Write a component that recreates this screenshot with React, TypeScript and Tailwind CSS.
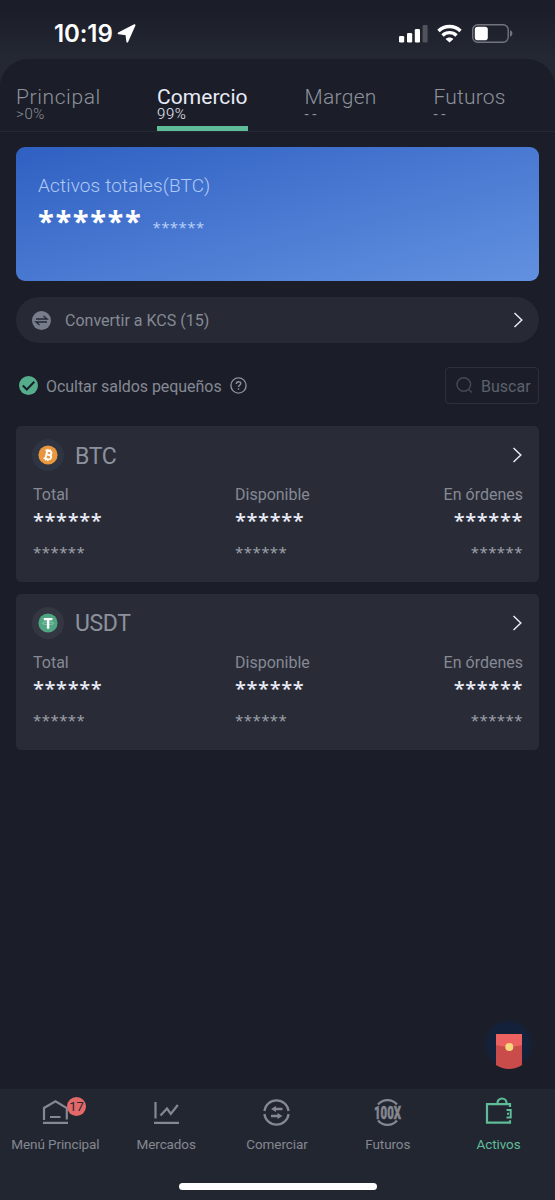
import type { ReactNode } from 'react';
import clsx from 'clsx';

interface Tab {
  label: string;
  share: string;
  active?: boolean;
  width: string;
  tracking: string;
}

const tabs: Tab[] = [
  { label: 'Principal', share: '>0%', width: 'w-[141px]', tracking: 'tracking-[0.6px]' },
  { label: 'Comercio', share: '99%', active: true, width: 'w-[147.5px]', tracking: 'tracking-[0.05px]' },
  { label: 'Margen', share: '--', width: 'w-[129px]', tracking: 'tracking-[0.3px]' },
  { label: 'Futuros', share: '--', width: 'w-[100px]', tracking: 'tracking-[0.2px]' },
];

function Mask({ className }: { className: string }) {
  return <span className={clsx("block font-['Open_Sans',sans-serif]", className)}>******</span>;
}

function Chevron() {
  return (
    <svg className="h-4 w-[11px]" viewBox="0 0 11 16" fill="none" stroke="#e6e9f5" strokeWidth="1.5">
      <path d="M1.5 1 8.8 8l-7.3 7" />
    </svg>
  );
}

function StatusBar() {
  return (
    <div className="flex h-[85px] shrink-0 bg-linear-to-b from-[#1b1e28] from-10% to-[#242833] to-70% pl-[54px]">
      <div className="flex h-[67px] w-full items-center">
        <span className="w-[63px] font-['Inter',sans-serif] text-[24px] font-semibold tracking-[-0.1px] text-white">10:19</span>
        <svg className="h-[19px] w-[19px]" viewBox="0 0 19 19" fill="#fff" stroke="#fff" strokeWidth="1.8" strokeLinejoin="round">
          <path d="M1.6 9.300 17.600 1.100 10.300 17.600 9.300 10.300Z" />
        </svg>
        <svg className="ml-[263px] h-[18px] w-[29px]" viewBox="0 0 29 18" fill="#fff">
          <rect x="0" y="11" width="5.200" height="6.500" rx="1.300" />
          <rect x="8" y="8" width="5.200" height="9.500" rx="1.300" />
          <rect x="15.800" y="4" width="5.200" height="13.500" rx="1.300" />
          <rect x="23.600" y="0" width="5" height="17.500" rx="1.300" fill="#50535d" />
        </svg>
        <svg className="ml-[9px] h-[19px] w-[25px]" viewBox="0 0 25 19" fill="none" stroke="#fff" strokeWidth="3.400">
          <path d="M1.500 7C7.500.9 17.500.9 23.500 7" />
          <path d="M5.500 11.500c3.900-3.800 10.100-3.800 14 0" />
          <path d="M12.500 18.600 8.600 14.900c2.200-2 5.600-2 7.800 0Z" fill="#fff" stroke="none" />
        </svg>
        <svg className="ml-[10px] h-[19px] w-[41px]" viewBox="0 0 41 19">
          <rect x="0.700" y="0.700" width="35.500" height="17.600" rx="5" fill="none" stroke="#72757e" strokeWidth="1.400" />
          <rect x="2.800" y="2.800" width="13" height="13.400" rx="2.800" fill="#fff" />
          <path d="M38 6.300c3.200 1.200 3.200 5.200 0 6.400Z" fill="#72757e" />
        </svg>
      </div>
    </div>
  );
}

function AccountTabs() {
  return (
    <div className="flex h-[73px] border-b border-[#242833] pt-7 pl-4">
      {tabs.map((tab) => (
        <div key={tab.label} className={clsx('shrink-0', tab.width, tab.active ? 'text-[#e8ebf6]' : 'text-[#8e929d]')}>
          <div className={clsx('text-[21px] leading-5', tab.tracking, !tab.active && 'font-light')}>{tab.label}</div>
          <div className={clsx('text-[15px] leading-[15px]', tab.share === '--' ? 'tracking-[3.5px]' : 'font-light tracking-[0.6px]')}>
            {tab.share}
          </div>
          {tab.active && <div className="mt-1 h-[5px] w-[91px] bg-[#5fbc98]" />}
        </div>
      ))}
    </div>
  );
}

function BtcIcon() {
  return (
    <svg className="size-8" viewBox="0 0 32 32">
      <circle cx="16" cy="16" r="16" fill="#2e3441" />
      <circle cx="16" cy="16" r="9.600" fill="#e9973e" />
      <g transform="rotate(13 16 16)" fill="none" stroke="#fff" strokeWidth="1.900">
        <path d="M12.400 11.800h4.600a1.900 1.900 0 0 1 0 3.900h-2.600 3a2.200 2.200 0 0 1 0 4.400h-5M14.300 11.800v8.300" />
        <path d="M14.800 10v2M17 10v2M14.800 20v2M17 20v2" strokeWidth="1.300" />
      </g>
    </svg>
  );
}

function UsdtIcon() {
  return (
    <svg className="size-8" viewBox="0 0 32 32" fill="none">
      <circle cx="16" cy="16" r="16" fill="#343641" />
      <circle cx="16" cy="16" r="9.600" fill="#4fa582" />
      <ellipse cx="16" cy="16.300" rx="5.700" ry="1.300" stroke="#9fd2bd" strokeWidth=".7" />
      <path d="M11.800 12.100h8.600M16.100 12v9.700" stroke="#fff" strokeWidth="2.400" />
    </svg>
  );
}

const columns = [
  { label: 'Total', align: 'w-[202px]' },
  { label: 'Disponible', align: 'w-[180px]' },
  { label: 'En órdenes', align: 'ml-auto flex flex-col items-end' },
];

function AssetCard({ name, icon }: { name: string; icon: ReactNode }) {
  return (
    <div className="h-[156px] rounded-[5px] bg-[#292c36] px-4 pt-[13px]">
      <div className="flex h-8 items-center">
        {icon}
        <span className="mt-[3px] ml-[11px] flex-1 text-[23px] leading-8 tracking-[-0.4px] text-[#8d919d]">{name}</span>
        <Chevron />
      </div>
      <div className="mt-4 flex pl-px">
        {columns.map((column) => (
          <div key={column.label} className={column.align}>
            <div className="text-[16px] leading-4 text-[#858994]">{column.label}</div>
            <Mask className="mt-2 h-5 text-[20px] leading-5 font-semibold tracking-[0.6px] text-[#e8ebf6]" />
            <Mask className="mt-[13px] h-4 text-[15px] leading-4 tracking-[0.45px] text-[#a0a4ae]" />
          </div>
        ))}
      </div>
    </div>
  );
}

const navItems: { label: string; badge?: string; active?: boolean; icon: ReactNode }[] = [
  {
    label: 'Menú Principal',
    badge: '17',
    icon: <path d="M3 22V10L14.500 3.200 25.800 10v11.500M2 24.800h25M9 19h10.500" />,
  },
  { label: 'Mercados', icon: <path d="M3.500 4v16.500M2 24.800h25M8.500 17.500l6.500-7 3.800 5.500 7-9" /> },
  {
    label: 'Comerciar',
    icon: (
      <>
        <path d="M2.400 13A12.200 12.200 0 0 1 26.600 13M26.600 16A12.200 12.200 0 0 1 2.400 16" />
        <path d="M12 11h8.500M9 18h8.500" strokeWidth="2.400" />
        <path d="m9 11 5-3v6ZM20.500 18l-5-3v6Z" fill="currentColor" stroke="none" />
      </>
    ),
  },
  {
    label: 'Futuros',
    icon: (
      <>
        <path d="M5 6.500a12.500 12.500 0 0 1 19 0M5 22.500a12.500 12.500 0 0 0 19 0" />
        <text
          x="1"
          y="21"
          textLength="27"
          lengthAdjust="spacingAndGlyphs"
          fontSize="18.500"
          fontWeight="900"
          fill="currentColor"
          strokeWidth=".5"
        >
          100X
        </text>
      </>
    ),
  },
  {
    label: 'Activos',
    active: true,
    icon: (
      <>
        <path d="M26 9V6.200H3v18.500h23v-2.500M13.500 6V5a4.500 4.500 0 0 1 9 0v1" />
        <path d="M22.500 12h4.200v7.500h-4.200M23 15.700h2" strokeWidth="2" />
      </>
    ),
  },
];

function BottomNav() {
  return (
    <div className="mt-auto h-[111px] bg-[#222631] pt-[9px]">
      <div className="grid w-[554px] grid-cols-5">
        {navItems.map((item) => (
          <div key={item.label} className={clsx('relative flex flex-col items-center', item.active ? 'text-[#5fbc98]' : 'text-[#858890]')}>
            <svg className="h-[29px] w-[29px] overflow-visible" viewBox="0 0 29 29" fill="none" stroke="currentColor" strokeWidth="2.200">
              {item.icon}
            </svg>
            {item.badge && (
              <span className="absolute top-[-1px] left-[67px] flex size-[19px] items-center justify-center rounded-full bg-[#e26968] text-[13px] text-[#252833]">
                {item.badge}
              </span>
            )}
            <span className="mt-[9px] text-[13.5px] leading-4 tracking-[-0.1px] whitespace-nowrap">{item.label}</span>
          </div>
        ))}
      </div>
      <div className="mx-auto mt-[31px] h-[7px] w-[198px] rounded-full bg-white" />
    </div>
  );
}

export default function App() {
  return (
    <div className="relative flex h-[1200px] w-[555px] flex-col overflow-hidden bg-[#1b1e28] font-['Roboto',sans-serif]">
      <StatusBar />
      <div className="-mt-[26px] rounded-t-[28px] bg-[#1b1e28]">
        <AccountTabs />
        <div className="px-4">
          <div className="mt-[15px] h-[134px] rounded-[9px] bg-linear-[165deg] from-[#2f60c2] to-[#6291e0] px-[22px] pt-[29px]">
            <div className="text-[19px] leading-5 font-light tracking-[0.15px] text-[#afc9f5]">Activos totales(BTC)</div>
            <div className="mt-[10px] flex">
              <Mask className="text-[29px] leading-[30px] font-bold tracking-[1.6px] text-white" />
              <Mask className="mt-1.5 ml-[10px] text-[15px] leading-[30px] tracking-[0.45px] text-[#b9d0f8]" />
            </div>
          </div>

          <div className="mt-4 flex h-[46px] items-center rounded-full bg-[#272a34] pr-[15px] pl-4">
            <svg className="size-[19px]" viewBox="0 0 19 19" fill="none" stroke="#272a34" strokeWidth="1.400">
              <circle cx="9.500" cy="9.500" r="9.500" fill="#787d8c" stroke="none" />
              <path d="M4 8h11l-3.500-3M15 11H4l3.500 3" />
            </svg>
            <span className="mt-0.5 ml-[14px] flex-1 text-[16px] text-[#858994]">Convertir a KCS (15)</span>
            <Chevron />
          </div>

          <div className="mt-6 flex h-[37px] items-center">
            <svg className="ml-[3px] size-[19px]" viewBox="0 0 19 19" fill="none">
              <circle cx="9.500" cy="9.500" r="9.500" fill="#56ad8b" />
              <path d="m3.800 9.500 4 4 7.500-7.700" stroke="#1b1e28" strokeWidth="2" />
            </svg>
            <span className="mt-[3px] ml-2 w-[176px] text-[16px] tracking-[-0.05px] whitespace-nowrap text-[#858994]">
              Ocultar saldos pequeños
            </span>
            <svg className="ml-2 size-[17px]" viewBox="0 0 17 17" fill="none" stroke="#8b8f9a" strokeWidth="1.400">
              <circle cx="8.500" cy="8.500" r="7.600" />
              <path d="M6.300 7c0-3 4.500-2.900 4.500-.4C10.800 8.200 8.500 8.200 8.500 10M8.500 11.200v1.500" />
            </svg>
            <div className="ml-auto flex h-[37px] w-[94px] items-center rounded-[4px] border border-[#2d303b] pl-[10px]">
              <svg className="size-[17px]" viewBox="0 0 17 17" fill="none" stroke="#464a55" strokeWidth="1.400">
                <circle cx="7.800" cy="7.500" r="6.800" />
                <path d="m12.500 12.500 3.500 3" />
              </svg>
              <span className="mt-[3px] ml-2 text-[16px] text-[#5d616d]">Buscar</span>
            </div>
          </div>

          <div className="mt-[22px] flex flex-col gap-[11.500px]">
            <AssetCard name="BTC" icon={<BtcIcon />} />
            <AssetCard name="USDT" icon={<UsdtIcon />} />
          </div>
        </div>
      </div>

      <svg className="absolute top-[1018px] left-[483px] size-[52px]" viewBox="0 0 52 52">
        <defs>
          <radialGradient id="glow">
            <stop offset="75%" stopColor="#14213b" />
            <stop offset="100%" stopColor="#1b1e28" />
          </radialGradient>
        </defs>
        <circle cx="25.500" cy="26" r="26" fill="url(#glow)" />
        <path d="M13 16h26v31c-8 5.300-18 5.300-26 0Z" fill="#c94c4a" />
        <path d="M13 16h26v11c-8 2-18 2-26 0Z" fill="#ec6261" />
        <circle cx="26.300" cy="29" r="4" fill="#f7d77c" />
      </svg>

      <BottomNav />
    </div>
  );
}
